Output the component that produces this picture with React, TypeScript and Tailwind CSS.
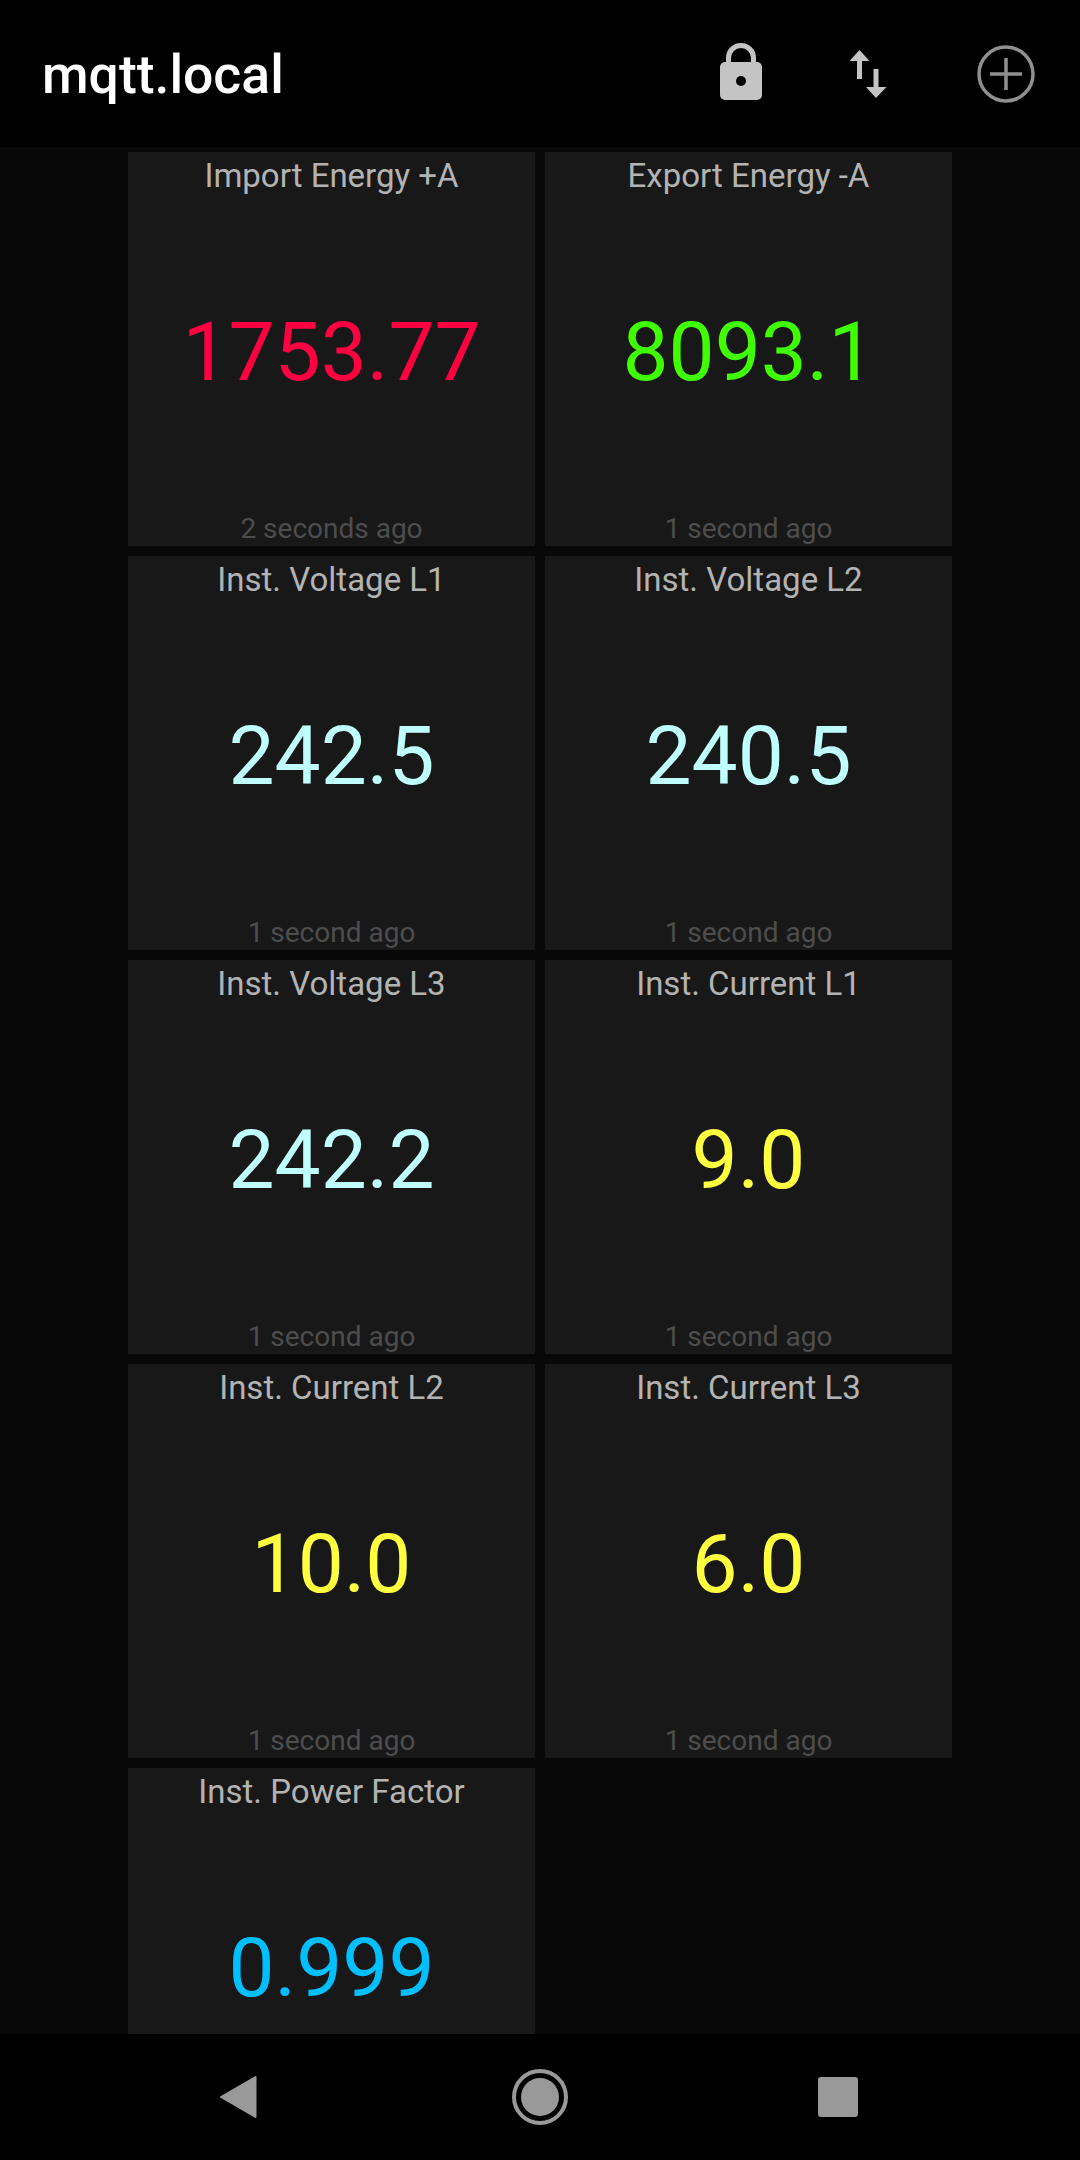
import React from "react";

const tiles = [
  { t: "Import Energy +A", v: "1753.77", c: "text-[#ff0040]", a: "2 seconds ago" },
  { t: "Export Energy -A", v: "8093.1", c: "text-[#40ff00]", a: "1 second ago" },
  { t: "Inst. Voltage L1", v: "242.5", c: "text-[#bfffff]", a: "1 second ago" },
  { t: "Inst. Voltage L2", v: "240.5", c: "text-[#bfffff]", a: "1 second ago" },
  { t: "Inst. Voltage L3", v: "242.2", c: "text-[#bfffff]", a: "1 second ago" },
  { t: "Inst. Current L1", v: "9.0", c: "text-[#ffff40]", a: "1 second ago" },
  { t: "Inst. Current L2", v: "10.0", c: "text-[#ffff40]", a: "1 second ago" },
  { t: "Inst. Current L3", v: "6.0", c: "text-[#ffff40]", a: "1 second ago" },
  { t: "Inst. Power Factor", v: "0.999", c: "text-[#00bfff]", a: "1 second ago" },
];

function Tile({ t, v, c, a }: { t: string; v: string; c: string; a: string }) {
  return (
    <div className="h-[394px] bg-[#181818] flex flex-col items-center overflow-hidden">
      <div className="h-[48px] pt-[4px] text-[33px] leading-[40px] text-[#b3b3b3]">{t}</div>
      <div className="flex-1 flex items-center justify-center pb-[8px]">
        <span className={`text-[82px] leading-[100px] ${c}`}>{v}</span>
      </div>
      <div className="h-[34px] text-[28px] leading-[34px] text-[#4d4d4d]">{a}</div>
    </div>
  );
}

export default function App() {
  return (
    <div className="w-[1080px] h-[2160px] flex flex-col bg-black font-['Roboto',sans-serif]">
      <header className="h-[147px] shrink-0 bg-black flex items-center pl-[42px]">
        <div className="flex-1 pt-[2px] text-[53.5px] leading-[60px] font-medium text-white">mqtt.local</div>
        <div className="flex items-center">
          <svg width="44" height="58" viewBox="0 0 44 58" className="mr-[86px] mb-[3px]">
            <path d="M9.500 22V15C9.500 8 15 2.500 22 2.500S34.500 8 34.500 15V22" fill="none" stroke="#c4c4c4" strokeWidth="5" />
            <rect x="1" y="19" width="42" height="38" rx="5" fill="#c4c4c4" />
            <circle cx="22" cy="38" r="5" fill="#000" />
          </svg>
          <svg width="38" height="48" viewBox="0 0 38 48" className="mr-[90px]">
            <path d="M0.500 11L10.500 0L20.500 11H13V29H8V11Z" fill="#c4c4c4" />
            <path d="M17 37H24.500V19H29.500V37H37.500L27 48Z" fill="#c4c4c4" />
          </svg>
          <svg width="58" height="58" viewBox="0 0 58 58" className="mr-[45px]">
            <circle cx="29" cy="29" r="27" fill="none" stroke="#909090" strokeWidth="3.500" />
            <path d="M29 13V45M13 29H45" stroke="#909090" strokeWidth="3.500" />
          </svg>
        </div>
      </header>
      <main className="flex-1 min-h-0 overflow-hidden bg-[#080808] pt-[5px] px-[128px]">
        <div className="grid grid-cols-[407px_407px] gap-[10px]">
          {tiles.map((x) => (
            <Tile key={x.t} {...x} />
          ))}
        </div>
      </main>
      <nav className="h-[126px] shrink-0 bg-black flex items-center justify-center pr-[3px]">
        <svg width="38" height="44" viewBox="0 0 38 44" className="mr-[255px]">
          <path d="M36.500 2V42L2 22Z" fill="#999" stroke="#999" strokeWidth="2" strokeLinejoin="round" />
        </svg>
        <svg width="56" height="56" viewBox="0 0 56 56" className="mr-[250px]">
          <circle cx="28" cy="28" r="26" fill="none" stroke="#999" strokeWidth="4" />
          <circle cx="28" cy="28" r="19" fill="#999" />
        </svg>
        <svg width="40" height="40" viewBox="0 0 40 40">
          <rect x="0" y="0" width="40" height="40" rx="3" fill="#999" />
        </svg>
      </nav>
    </div>
  );
}
